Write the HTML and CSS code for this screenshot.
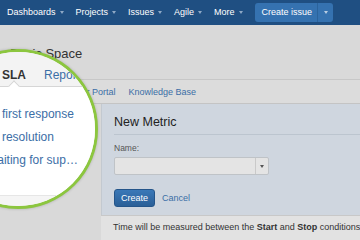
FILE: index.html
```html
<!DOCTYPE html>
<html lang="en">

<head>
    <meta charset="UTF-8">
    <meta name="viewport" content="width=device-width, initial-scale=1.0">
    <title>SLA - Basic Space</title>
    <link rel="stylesheet" href="styles.css">
</head>

<body>
    <header class="topbar">
        <ul class="gnb">
            <li>Dashboards<span class="caret"></span></li>
            <li>Projects<span class="caret"></span></li>
            <li>Issues<span class="caret"></span></li>
            <li>Agile<span class="caret"></span></li>
            <li>More<span class="caret"></span></li>
        </ul>
        <div class="create_btn">
            <span class="label">Create issue</span>
            <span class="split"><span class="caret"></span></span>
        </div>
    </header>

    <section class="page">
        <h1 class="page_title">Basic Space</h1>
        <nav class="tabs">
            <ul>
                <li>Reports</li>
                <li>Customer Portal</li>
                <li>Knowledge Base</li>
            </ul>
        </nav>
        <div class="content">
            <div class="side"></div>
            <div class="main">
                <div class="panel">
                    <h2>New Metric</h2>
                    <label class="field_label">Name:</label>
                    <div class="select">
                        <span class="select_value"></span>
                        <span class="select_btn"><span class="caret"></span></span>
                    </div>
                    <div class="actions">
                        <a href="#" class="btn">Create</a>
                        <a href="#" class="link">Cancel</a>
                    </div>
                </div><!-- .panel end -->
                <p class="info">Time will be measured between the <b>Start</b> and <b>Stop</b> conditions</p>
            </div><!-- .main end -->
        </div><!-- .content end -->
    </section><!-- .page end -->

    <!-- magnifier over the sla tab -->
    <div class="loupe">
        <ul class="zoom_tabs">
            <li class="on">SLA</li>
            <li>Reports</li>
        </ul>
        <ul class="zoom_list">
            <li>Time to first response</li>
            <li>Time to resolution</li>
            <li>Time waiting for support</li>
        </ul>
        <div class="zoom_foot"></div>
    </div><!-- .loupe end -->
</body>

</html>
```

FILE: styles.css
```css
@charset "utf-8";

* {
    margin: 0;
    padding: 0;
    box-sizing: border-box;
}

li {
    list-style: none;
}

a {
    text-decoration: none;
    color: inherit;
}

html,
body {
    height: 100%;
    overflow: hidden;
}

body {
    font-family: "Liberation Sans", Arial, sans-serif;
    line-height: 1;
    color: #333;
    background-color: #d9d9d9;
}

.caret {
    display: inline-block;
    width: 0;
    height: 0;
    border-left: 2.5px solid transparent;
    border-right: 2.5px solid transparent;
    border-top: 3px solid #8fa9c6;
    vertical-align: middle;
}

/* top bar */
.topbar {
    height: 25px;
    background-color: #1f4f82;
    display: flex;
    align-items: center;
    padding-left: 7px;
    color: #fff;
    font-size: 9px;
}

.gnb {
    display: flex;
    gap: 12px;
}

.gnb li {
    display: flex;
    align-items: center;
}

.gnb li .caret {
    margin-left: 4px;
}

.create_btn {
    margin-left: 12px;
    height: 19px;
    display: flex;
    background-color: #3572b0;
    border-radius: 3px;
}

.create_btn .label {
    display: flex;
    align-items: center;
    padding: 0 5px 0 7px;
}

.create_btn .split {
    width: 16px;
    display: flex;
    align-items: center;
    justify-content: center;
    border-left: 1px solid #2b639c;
}

.create_btn .caret {
    border-top-color: #b9cde2;
}

/* page head */
.page_title {
    font-size: 13px;
    font-weight: normal;
    color: #333;
    padding: 22px 0 0 10px;
    height: 54px;
}

.tabs {
    height: 25px;
    border-top: 1px solid #c7c7c7;
    border-bottom: 1px solid #c4c4c4;
    background-color: #dcdcdc;
}

.tabs ul {
    display: flex;
    gap: 13px;
    padding: 8px 0 0 6px;
    font-size: 9px;
    color: #3b6ea6;
}

.content {
    display: flex;
    height: 136px;
}

.side {
    width: 101px;
    flex-shrink: 0;
}

.main {
    flex: 1;
}

/* metric form */
.panel {
    background-color: #cfd6df;
    border-left: 1px solid #c3c9d0;
    padding: 11px 0 8px 12px;
}

.panel h2 {
    font-size: 12.5px;
    font-weight: normal;
    color: #222;
    line-height: 15px;
    padding-bottom: 4px;
    border-bottom: 1px solid #bcc5cf;
}

.field_label {
    display: block;
    font-size: 8.5px;
    line-height: 10px;
    color: #555;
    margin-top: 8px;
}

.select {
    margin-top: 4px;
    width: 155px;
    height: 18px;
    display: flex;
    background-color: #e4e4e4;
    border: 1px solid #bfc3c7;
    border-radius: 2px;
}

.select_value {
    flex: 1;
}

.select_btn {
    width: 13px;
    display: flex;
    align-items: center;
    justify-content: center;
    border-left: 1px solid #c9c9c9;
}

.select_btn .caret {
    border-top-color: #555;
}

.actions {
    margin-top: 14px;
    display: flex;
    align-items: center;
    gap: 7px;
    font-size: 9px;
}

.btn {
    width: 41px;
    height: 18px;
    display: flex;
    align-items: center;
    justify-content: center;
    color: #fff;
    background: linear-gradient(#3a78b8, #2a5f97);
    border: 1px solid #24558a;
    border-radius: 3px;
}

.link {
    color: #3b6ea6;
}

.info {
    font-size: 9px;
    line-height: 11px;
    padding: 6px 0 0 12px;
    height: 25px;
    white-space: nowrap;
    background-color: #e2e2e2;
    border-top: 1px solid #c8c8c8;
}

/* loupe */
.loupe {
    position: absolute;
    left: -62px;
    top: 49px;
    width: 160px;
    height: 160px;
    border: 3px solid #8cc63f;
    border-radius: 50%;
    overflow: hidden;
    background-color: #f2f2f2;
    box-shadow: 0 0 3px rgba(0, 0, 0, 0.2);
}

.zoom_tabs {
    height: 35px;
    display: flex;
    gap: 18px;
    padding: 16px 0 0 61px;
    font-size: 12px;
    line-height: 14px;
    color: #3b6ea6;
    background-color: #f3f3f3;
    border-bottom: 1px solid #d6d6d6;
}

.zoom_tabs li {
    padding-bottom: 5px;
}

.zoom_tabs li.on {
    position: relative;
    font-weight: bold;
    color: #333;
}

.zoom_tabs li.on::after {
    content: "";
    position: absolute;
    left: 50%;
    bottom: -4px;
    width: 7px;
    height: 7px;
    background-color: #fff;
    border-left: 1px solid #d6d6d6;
    border-top: 1px solid #d6d6d6;
    transform: translateX(-50%) rotate(45deg);
}

.zoom_list {
    height: 109px;
    padding: 16px 0 0 18px;
    background-color: #fff;
    border-bottom: 1px solid #e6e6e6;
    font-size: 12px;
    line-height: 23px;
    color: #3b6ea6;
}

.zoom_list li {
    width: 121px;
    white-space: nowrap;
    overflow: hidden;
    text-overflow: ellipsis;
}

.zoom_foot {
    height: 20px;
    background-color: #f5f5f5;
}
```
